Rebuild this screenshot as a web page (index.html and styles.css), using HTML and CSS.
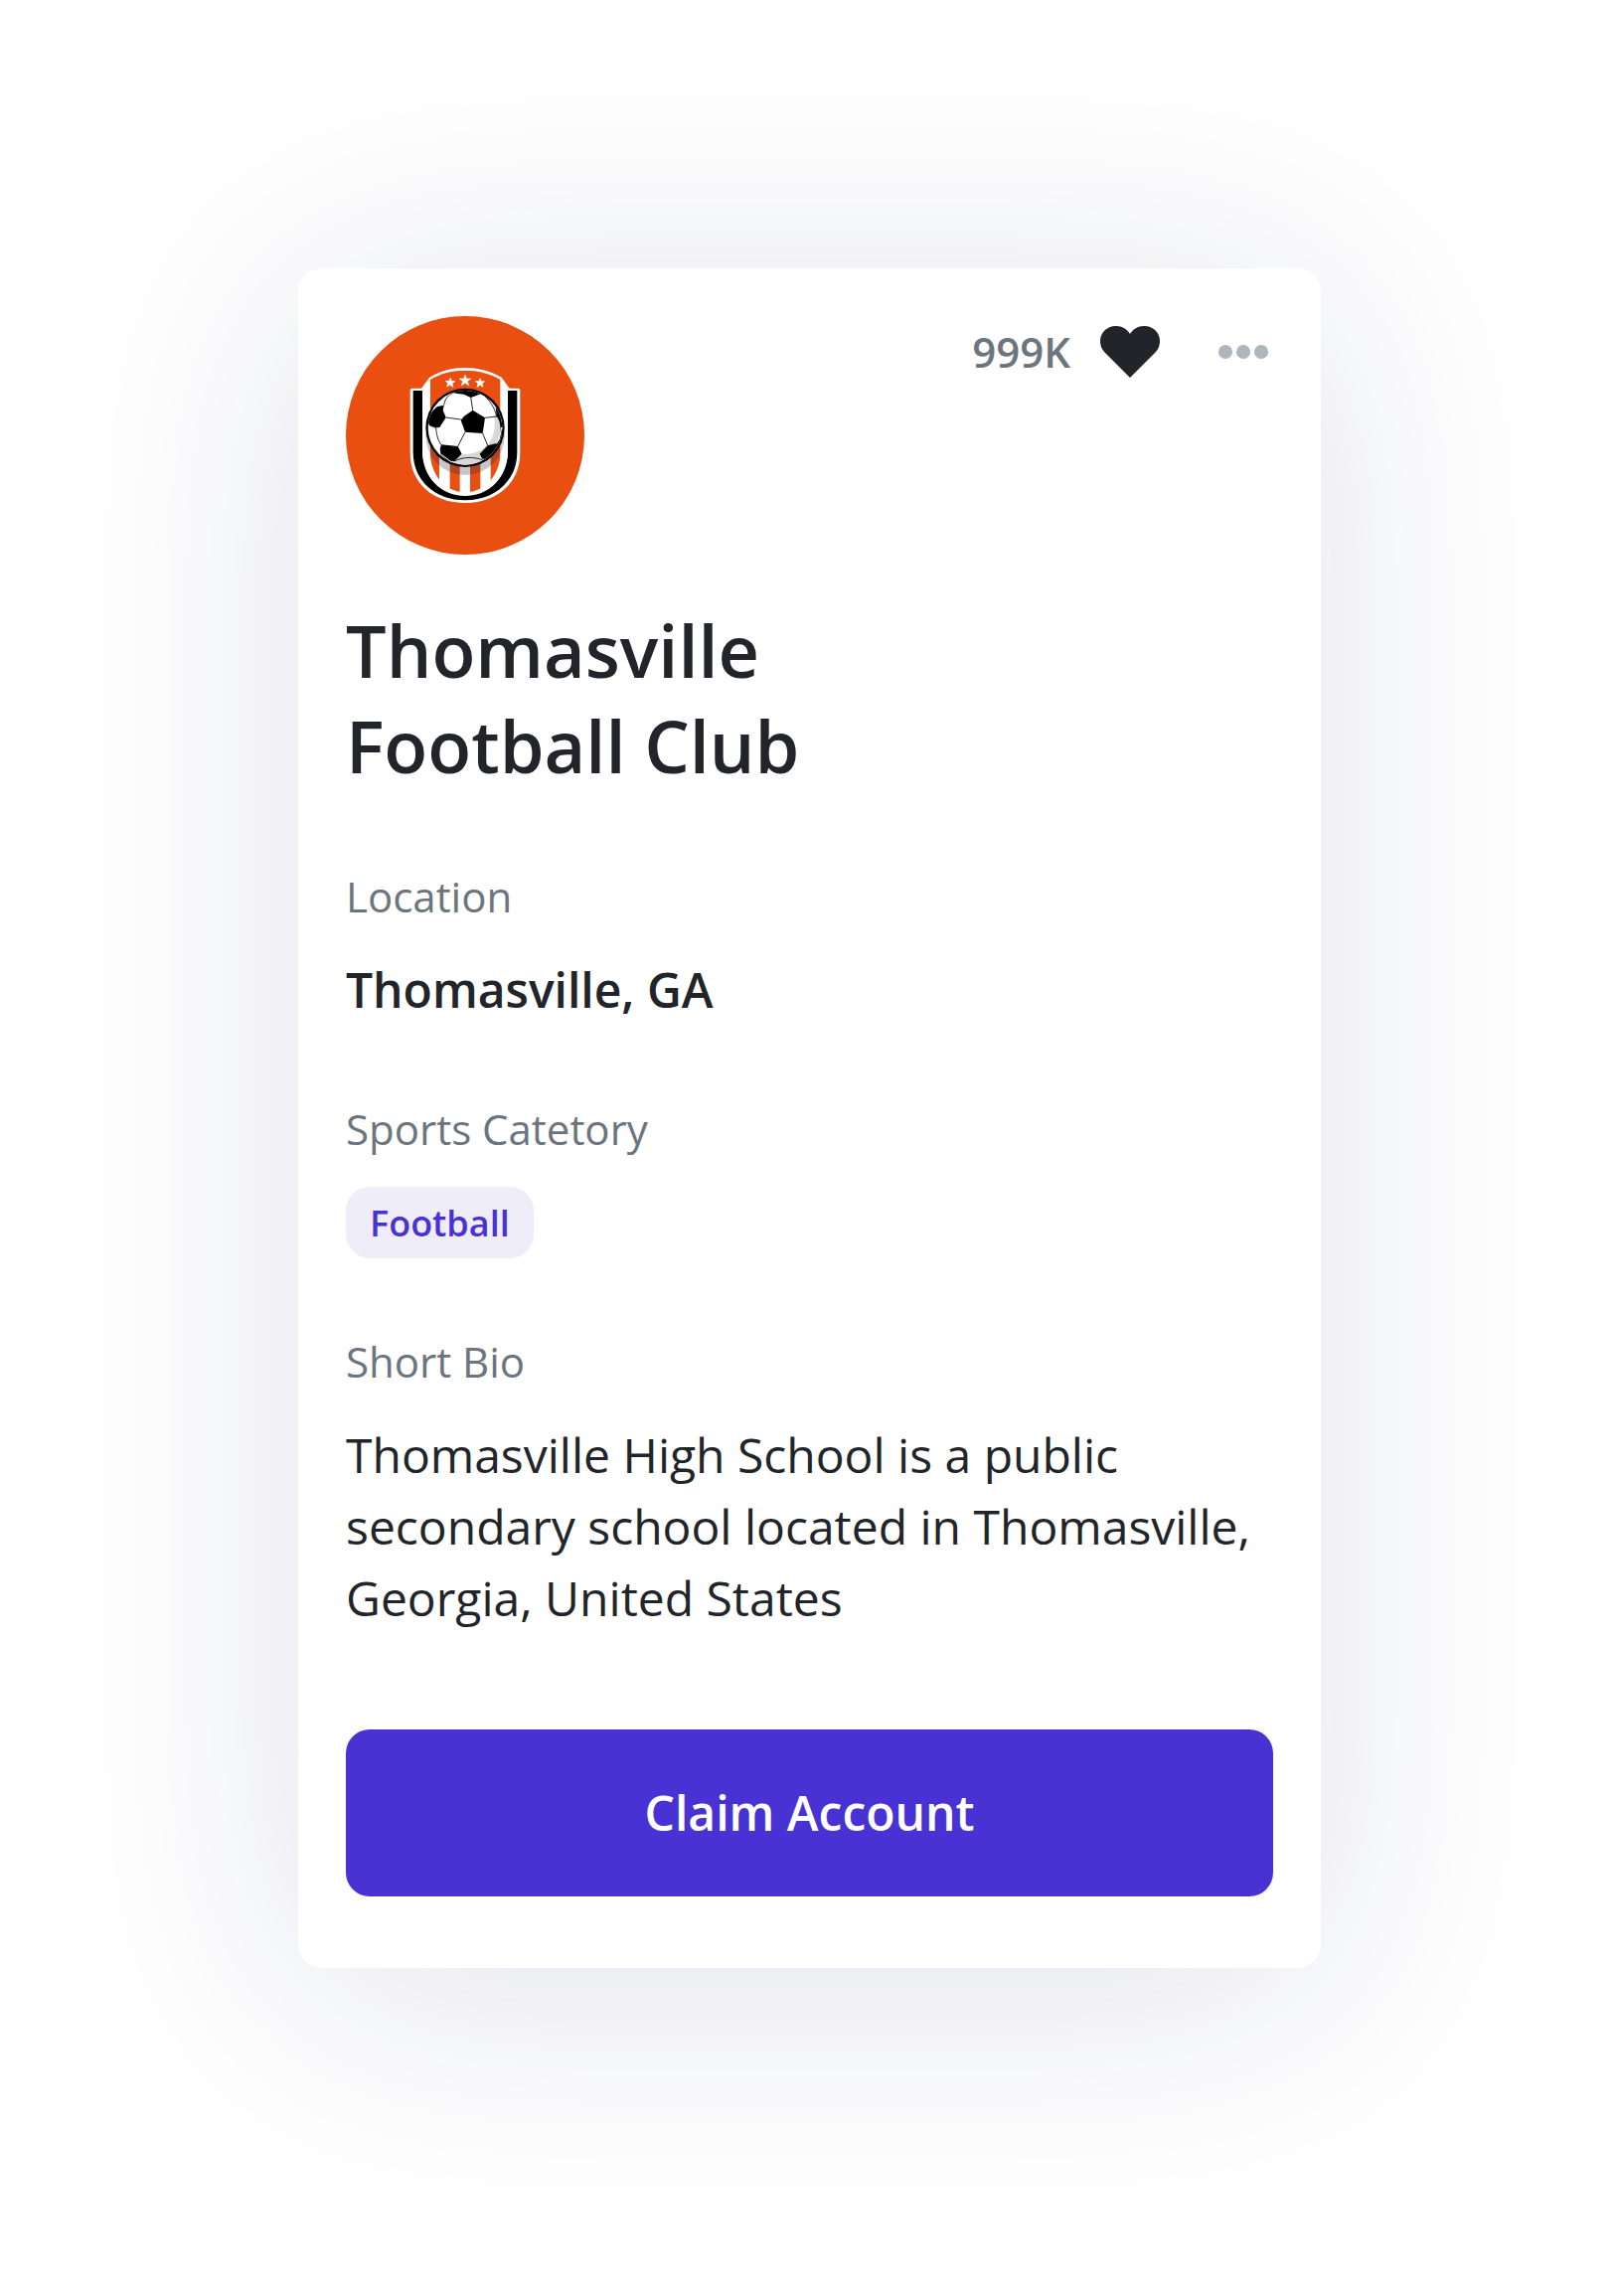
FILE: index.html
```html
<!DOCTYPE html>
<html lang="en">
<head>
  <meta charset="utf-8">
  <meta name="viewport" content="width=device-width, initial-scale=1">
  <title>Thomasville Football Club</title>
  <link rel="stylesheet" href="styles.css">
</head>
<body>
  <main class="page">
    <article class="card">
      <header class="card-header">
        <svg class="avatar" viewBox="0 0 720 720" role="img" aria-label="Club crest">
          <defs>
            <clipPath id="field"><path d="M98 66C130 47 165 38 204 38C243 38 280 48 311 66V280C311 350 268 406 204 406C140 406 98 350 98 280Z"/></clipPath>
            <clipPath id="ball"><circle cx="204" cy="211" r="112"/></clipPath>
            <clipPath id="shield"><path d="M75 92H333V280C333 360 278 417 204 417C130 417 75 360 75 280Z"/></clipPath>
          </defs>
          <circle cx="360" cy="360" r="360" fill="#e94f10"/>
          <g transform="translate(156 126)">
            <path fill="#fff" d="M38 98Q38 92 44 92H70Q76 90 78 84L96 60C128 39 165 30 204 30C243 30 282 40 314 59L332 84Q335 92 341 92H364Q370 92 370 98V288C370 376 302 438 204 438C106 438 38 376 38 288Z"/>
            <path fill="#000" d="M47 99H75V280C75 360 130 417 204 417C278 417 333 360 333 280V99H361V285C361 370 295 430 204 430C113 430 47 370 47 285Z"/>
            <path fill="#fff" d="M75 92H333V280C333 358 278 415 204 415C130 415 75 358 75 280Z"/>
            <g clip-path="url(#field)">
              <path fill="#e94f10" d="M98 30H311V250H98ZM98 240H126V410H98ZM158 240H188V410H158ZM219 240H250V410H219ZM281 240H311V410H281Z"/>
            </g>
            <circle cx="204" cy="235" r="119" fill="#23233c" fill-opacity=".26" clip-path="url(#shield)"/>
            <path fill="#fff" stroke="#fff" stroke-width="2" stroke-linejoin="round" d="M204 52L208 63L221 63L211 71L215 83L204 76L193 83L197 71L187 63L200 63ZM160 61L163 70L174 71L165 77L168 88L158 82L149 87L152 77L145 70L156 70ZM249 62L253 71L263 71L255 78L258 88L249 82L240 88L243 77L235 71L246 71Z"/>
            <circle cx="204" cy="211" r="119" fill="#000"/>
            <circle cx="204" cy="211" r="112" fill="#fff"/>
            <g clip-path="url(#ball)">
              <path fill="#d8d8d8" d="M292 178C302 260 250 292 198 290C180 300 165 310 160 312L204 326L270 315L325 250L322 195L305 170Z"/>
              <g fill="#000">
                <path d="M201 176L227 158L264 181L257 228L204 224L191 188Z"/>
                <path d="M90 190L104 162L120 147L140 143L137 158L146 180L127 210L116 211L96 203Z"/>
                <path d="M170 103L175 94H240L254 108L221 120L200 110L174 107Z"/>
                <path d="M132 262L182 267L194 290L171 312L152 311L131 293L128 275Z"/>
                <path d="M248 290L272 265L299 258L312 243L304 268L276 306L256 305Z"/>
                <path d="M296 148C316 174 322 215 311 252L308 251C315 215 309 186 299 177Z"/>
              </g>
              <path fill="none" stroke="#000" stroke-width="2.5" d="M221 118L227 158M146 180L191 186M264 181L299 177M204 224L182 267M257 228L272 265M116 211C118 238 124 252 132 262M96 203L116 211M171 312C198 299 227 298 256 308M140 143C142 125 155 108 172 104M254 108C279 127 293 150 299 177"/>
              <path fill="none" stroke="#fff" stroke-width="3" d="M102 164C112 141 132 119 158 110M133 292L163 315M314 210C312 230 305 247 299 259"/>
            </g>
          </g>
        </svg>
        <div class="actions">
          <button class="like" type="button" aria-label="Like, 999K likes">
            <span>999K</span>
            <svg class="heart" viewBox="0 0 72 72" aria-hidden="true"><path d="M36 62L10.500 36.500A16.500 16.500 0 0 1 6 24A15.500 15.500 0 0 1 22 10C28 10 33 13 36 18C39 13 44 10 50 10A15.500 15.500 0 0 1 66 24A16.500 16.500 0 0 1 61.500 36.500Z"/></svg>
          </button>
          <button class="more" type="button" aria-label="More options">
            <svg class="dots" viewBox="0 0 60 60" aria-hidden="true"><circle cx="12" cy="30" r="7"/><circle cx="30" cy="30" r="7"/><circle cx="48" cy="30" r="7"/></svg>
          </button>
        </div>
      </header>
      <h1 class="title">Thomasville<br>Football Club</h1>
      <dl class="details">
        <div class="detail">
          <dt>Location</dt>
          <dd class="strong">Thomasville, GA</dd>
        </div>
        <div class="detail">
          <dt>Sports Catetory</dt>
          <dd class="tags"><span class="tag">Football</span></dd>
        </div>
        <div class="detail">
          <dt>Short Bio</dt>
          <dd>Thomasville High School is a public secondary school located in Thomasville, Georgia, United States</dd>
        </div>
      </dl>
      <button class="claim" type="button">Claim Account</button>
    </article>
  </main>
</body>
</html>
```
FILE: styles.css
```css
* {
  box-sizing: border-box;
}

body {
  margin: 0;
  background: #fff;
  color: #212529;
  font-family: "Open Sans", "Noto Sans", sans-serif;
}

button {
  margin: 0;
  padding: 0;
  border: 0;
  background: none;
  font: inherit;
  cursor: pointer;
}

svg {
  display: block;
}

.page {
  padding: 270px 300px 330px;
  overflow: hidden;
}

.card {
  padding: 48px 48px 72px;
  border-radius: 24px;
  background: #fff;
  box-shadow: 0 24px 270px rgba(25, 32, 98, 0.13);
}

.card-header {
  display: flex;
  justify-content: space-between;
  align-items: flex-start;
}

.avatar {
  width: 240px;
  height: 240px;
}

.actions {
  display: flex;
  align-items: center;
  gap: 48px;
  height: 72px;
}

.like {
  display: flex;
  align-items: center;
  gap: 24px;
  color: #6c757d;
  font-size: 42px;
  font-weight: 600;
  line-height: 72px;
}

.heart {
  width: 72px;
  height: 72px;
  fill: #212529;
}

.dots {
  width: 60px;
  height: 60px;
  fill: #adb5bd;
}

.title {
  margin: 48px 0 72px;
  font-size: 72px;
  font-weight: 600;
  line-height: 96px;
}

.details {
  display: grid;
  gap: 72px;
  margin: 0 0 96px;
}

.detail {
  display: grid;
  gap: 26px;
}

dt {
  color: #6c757d;
  font-size: 42px;
  line-height: 64px;
}

dd {
  margin: 0;
  font-size: 48px;
  line-height: 72px;
}

.strong {
  font-weight: 600;
}

.tags {
  display: flex;
}

.tag {
  padding: 2px 24px 0;
  border-radius: 24px;
  background: #f0edfb;
  color: #4832d3;
  font-size: 36px;
  font-weight: 600;
  line-height: 70px;
}

.claim {
  width: 100%;
  padding: 48px;
  border-radius: 24px;
  background: #4832d3;
  color: #fff;
  font-size: 48px;
  font-weight: 600;
  line-height: 72px;
}
```
